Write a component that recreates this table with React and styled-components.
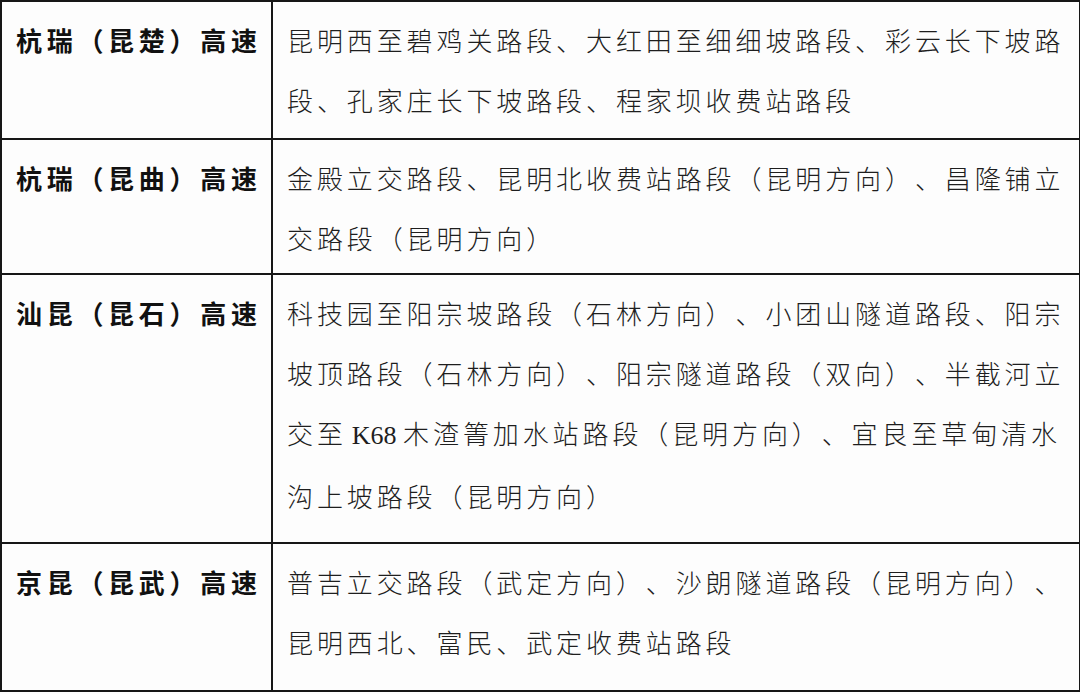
import React from "react";
import styled, { createGlobalStyle } from "styled-components";

const Global = createGlobalStyle`
  html, body { margin: 0; padding: 0; background: #fdfdfd; }
  body {
    font-family: "Noto Sans CJK SC", "Noto Sans", sans-serif;
    text-spacing-trim: space-all;
    font-feature-settings: "halt" 0, "chws" 0;
  }
`;

const Table = styled.div`
  width: 1077px;
  border: 2px solid #161616;
  display: grid;
  grid-template-columns: 271px 1fr;
  background: #fdfdfd;
`;

const Row = styled.div`
  display: contents;
`;

const Cell = styled.div`
  box-sizing: border-box;
  height: ${(p) => (p.$first ? p.$h : p.$h + 2)}px;
  padding: 8px 0 0 14px;
  border-top: ${(p) => (p.$first ? "none" : "2px solid #161616")};
  text-spacing-trim: space-all;
`;

const NameCell = styled(Cell)`
  border-right: 2px solid #161616;
  font-size: 26px;
  font-weight: 700;
  letter-spacing: 4.7px;
  line-height: 60px;
  color: #111;
  white-space: nowrap;
`;

const TextCell = styled(Cell)`
  font-size: 26px;
  font-weight: 300;
  letter-spacing: 3.9px;
  line-height: 60px;
  color: #1e1e1e;
`;

const Line = styled.span`
  display: block;
  white-space: nowrap;
`;

const Latin = styled.span`
  font-family: "Liberation Serif", serif;
  font-weight: 400;
  letter-spacing: 0;
  margin-left: 5px;
`;

const rows = [
  {
    name: "杭瑞（昆楚）高速",
    h: 136,
    lines: ["昆明西至碧鸡关路段、大红田至细细坡路段、彩云长下坡路", "段、孔家庄长下坡路段、程家坝收费站路段"],
  },
  {
    name: "杭瑞（昆曲）高速",
    h: 133,
    lines: ["金殿立交路段、昆明北收费站路段（昆明方向）、昌隆铺立", "交路段（昆明方向）"],
  },
  {
    name: "汕昆（昆石）高速",
    h: 267,
    lines: [
      "科技园至阳宗坡路段（石林方向）、小团山隧道路段、阳宗",
      "坡顶路段（石林方向）、阳宗隧道路段（双向）、半截河立",
      <>交至<Latin>K68 </Latin>木渣箐加水站路段（昆明方向）、宜良至草甸清水</>,
      "沟上坡路段（昆明方向）",
    ],
  },
  {
    name: "京昆（昆武）高速",
    h: 146,
    lines: ["普吉立交路段（武定方向）、沙朗隧道路段（昆明方向）、", "昆明西北、富民、武定收费站路段"],
  },
];

export default function App() {
  return (
    <>
      <Global />
      <Table>
        {rows.map((r, i) => (
          <Row key={i}>
            <NameCell $h={r.h} $first={i === 0}>{r.name}</NameCell>
            <TextCell $h={r.h} $first={i === 0}>
              {r.lines.map((l, j) => (
                <Line key={j}>{l}</Line>
              ))}
            </TextCell>
          </Row>
        ))}
      </Table>
    </>
  );
}
